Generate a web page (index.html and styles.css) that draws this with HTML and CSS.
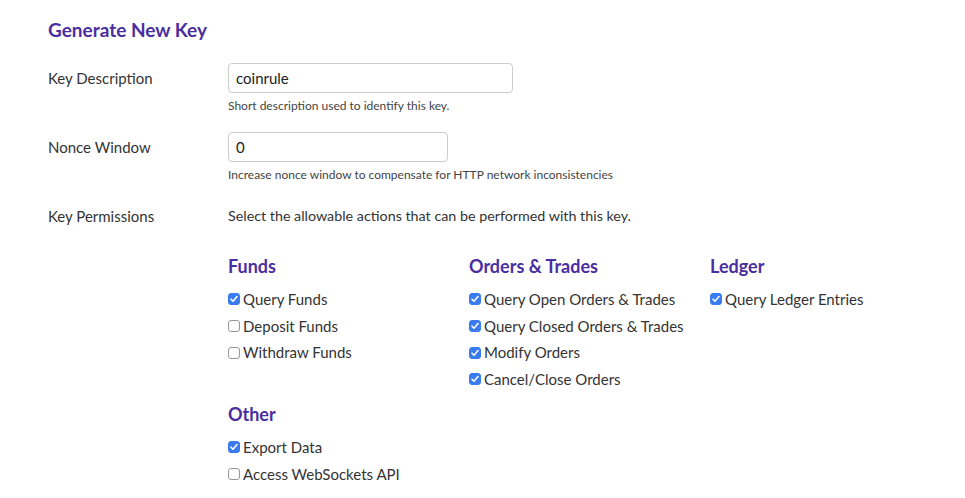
FILE: index.html
```html
<!DOCTYPE html>
<html lang="en">

<head>
    <meta charset="UTF-8">
    <meta name="viewport" content="width=device-width, initial-scale=1.0">
    <title>Generate New Key</title>
    <link rel="stylesheet" href="styles.css">
</head>

<body>
    <div class="container">
        <h1 class="title">Generate New Key</h1>

        <div class="form-row">
            <label class="row-label" for="keyDescription">Key Description</label>
            <div class="row-field">
                <input class="text-input input-wide" id="keyDescription" type="text" value="coinrule">
                <p class="help">Short description used to identify this key.</p>
            </div>
        </div>

        <div class="form-row">
            <label class="row-label" for="nonceWindow">Nonce Window</label>
            <div class="row-field">
                <input class="text-input input-narrow" id="nonceWindow" type="text" value="0">
                <p class="help">Increase nonce window to compensate for HTTP network inconsistencies</p>
            </div>
        </div>

        <div class="form-row">
            <div class="row-label">Key Permissions</div>
            <div class="row-field">
                <p class="perm-intro">Select the allowable actions that can be performed with this key.</p>

                <div class="perm-grid">
                    <div class="perm-group">
                        <h2>Funds</h2>
                        <label class="perm"><input type="checkbox" checked> Query Funds</label>
                        <label class="perm"><input type="checkbox"> Deposit Funds</label>
                        <label class="perm"><input type="checkbox"> Withdraw Funds</label>
                    </div>
                    <div class="perm-group">
                        <h2>Orders &amp; Trades</h2>
                        <label class="perm"><input type="checkbox" checked> Query Open Orders &amp; Trades</label>
                        <label class="perm"><input type="checkbox" checked> Query Closed Orders &amp; Trades</label>
                        <label class="perm"><input type="checkbox" checked> Modify Orders</label>
                        <label class="perm"><input type="checkbox" checked> Cancel/Close Orders</label>
                    </div>
                    <div class="perm-group">
                        <h2>Ledger</h2>
                        <label class="perm"><input type="checkbox" checked> Query Ledger Entries</label>
                    </div>
                    <div class="perm-group">
                        <h2>Other</h2>
                        <label class="perm"><input type="checkbox" checked> Export Data</label>
                        <label class="perm"><input type="checkbox"> Access WebSockets API</label>
                    </div>
                </div>
            </div>
        </div>
    </div>
</body>

</html>
```

FILE: styles.css
```css
body {
    font-family: Lato, "Open Sans", sans-serif;
    margin: 0;
    padding: 0;
    background-color: #fff;
    color: #333;
}

.container {
    padding: 18px 48px 0;
}

.title {
    margin: 0 0 21px;
    font-size: 19px;
    font-weight: 700;
    color: #4a2ea0;
    line-height: 24px;
}

.form-row {
    display: flex;
    margin-bottom: 18px;
}

.row-label {
    width: 180px;
    flex-shrink: 0;
    font-size: 15px;
    line-height: 30px;
    color: #333;
}

.row-field {
    flex: 1;
}

.text-input {
    box-sizing: border-box;
    height: 30px;
    padding: 0 7px;
    border: 1px solid #ccc;
    border-radius: 4px;
    font-family: inherit;
    font-size: 15px;
    color: #222;
    display: block;
}

.input-wide {
    width: 285px;
}

.input-narrow {
    width: 220px;
}

.help {
    margin: 5px 0 0;
    font-size: 12px;
    line-height: 16px;
    color: #444;
}

.perm-intro {
    margin: 0;
    font-size: 14.3px;
    line-height: 30px;
}

.perm-grid {
    display: grid;
    grid-template-columns: 241px 241px 241px;
    row-gap: 9px;
    margin-top: 23px;
}

.perm-group h2 {
    margin: 0 0 8px;
    font-size: 18px;
    font-weight: 700;
    color: #4a2ea0;
    line-height: 24px;
}

.perm {
    display: flex;
    align-items: center;
    gap: 3px;
    font-size: 15px;
    line-height: 26.7px;
    color: #333;
}

.perm input {
    appearance: none;
    width: 12px;
    height: 12px;
    margin: 0;
    border: 1px solid #999;
    border-radius: 3px;
    background: #fff;
}

.perm input:checked {
    border-color: #3a7bf0;
    background: #3a7bf0 url("data:image/svg+xml;utf8,<svg xmlns='http://www.w3.org/2000/svg' viewBox='0 0 12 12'><path d='M3 6.2l2 2 4-4.6' fill='none' stroke='white' stroke-width='1.6' stroke-linecap='round' stroke-linejoin='round'/></svg>") center / 12px 12px no-repeat;
}
```
